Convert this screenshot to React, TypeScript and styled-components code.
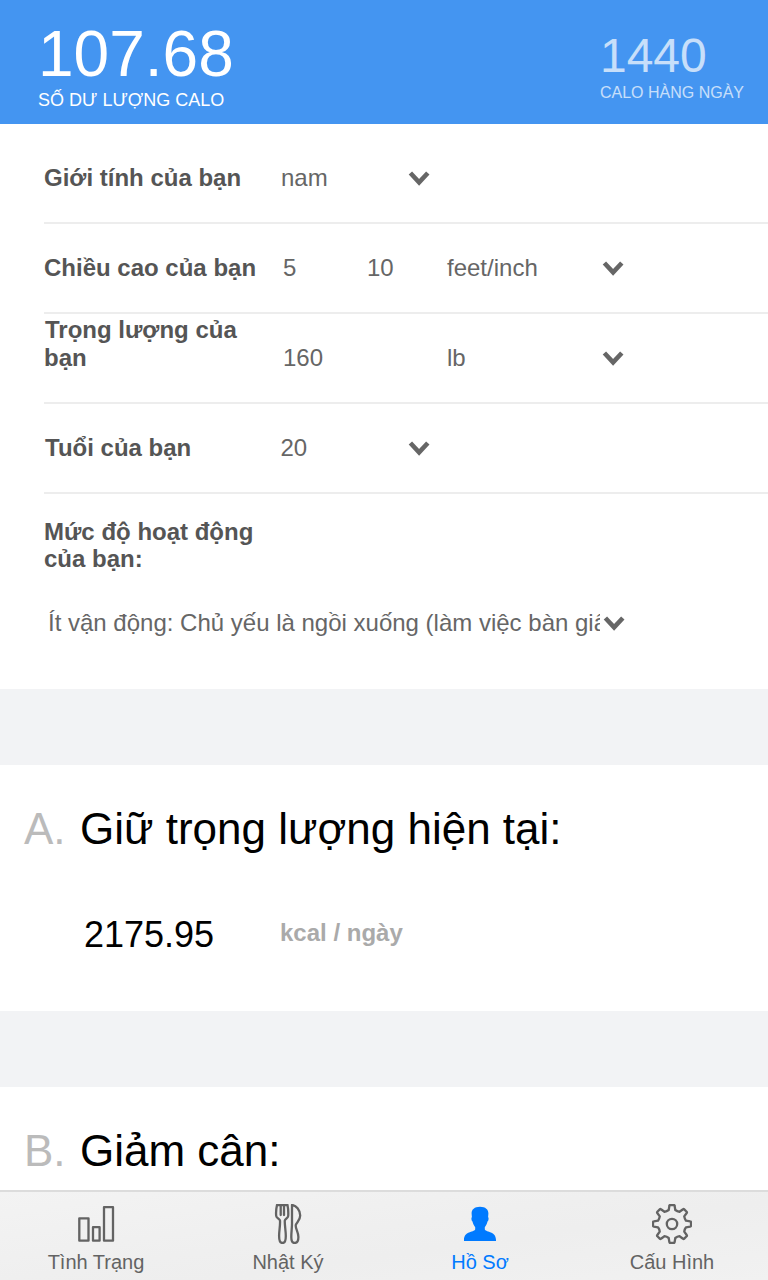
import React from "react";
import styled, { createGlobalStyle } from "styled-components";

const GlobalStyle = createGlobalStyle`
  * { box-sizing: border-box; }
  html, body { margin: 0; padding: 0; background: #fff; }
  body { font-family: "Liberation Sans", Arial, sans-serif; overflow: hidden; }
`;

const Screen = styled.div`
  width: 768px;
  height: 1280px;
  display: flex;
  flex-direction: column;
  overflow: hidden;
  background: #f2f3f5;
`;

const Header = styled.header`
  flex: none;
  height: 124px;
  display: flex;
  justify-content: space-between;
  align-items: flex-end;
  padding: 0 24px 14px 38px;
  background: #4495f1;
  color: #fff;
`;

const Stat = styled.div<{ $muted?: boolean }>`
  display: flex;
  flex-direction: column;
  opacity: ${(p) => (p.$muted ? 0.7 : 1)};
`;

const StatValue = styled.div<{ $size: number; $line: number }>`
  font-size: ${(p) => p.$size}px;
  line-height: ${(p) => p.$line}px;
`;

const StatLabel = styled.div<{ $size: number; $line: number; $bottom?: number }>`
  padding-bottom: ${(p) => p.$bottom ?? 0}px;
  font-size: ${(p) => p.$size}px;
  line-height: ${(p) => p.$line}px;
  white-space: nowrap;
`;

const Content = styled.main`
  flex: 1;
  min-height: 0;
  display: flex;
  flex-direction: column;
  gap: 76px;
  overflow: hidden;
`;

const Form = styled.section`
  flex: none;
  height: 565px;
  padding: 10px 0 0 44px;
  background: #fff;
  color: #666;
  font-size: 24px;
  line-height: 28px;
`;

const Row = styled.div`
  height: 90px;
  display: flex;
  align-items: flex-end;
  padding-bottom: 30px;
  border-bottom: 2px solid #ededed;
`;

const Label = styled.div<{ $width: number; $indent?: number }>`
  flex: none;
  width: ${(p) => p.$width}px;
  text-indent: ${(p) => p.$indent ?? 0}px;
  color: #555;
  font-weight: bold;
`;

const Value = styled.div<{ $width: number; $indent?: number }>`
  flex: none;
  width: ${(p) => p.$width}px;
  padding-left: ${(p) => p.$indent ?? 0}px;
  overflow: hidden;
  white-space: nowrap;
`;

const Arrow = styled.svg`
  flex: none;
  display: block;
  width: 24px;
  height: 28px;
  fill: none;
  stroke: #666;
  stroke-width: 4.6;
`;

const Activity = styled.div`
  display: flex;
  flex-direction: column;
  gap: 37px;
  padding-top: 24px;
  line-height: 27px;
`;

const ActivitySelect = styled.div`
  display: flex;
  align-items: center;
  gap: 2px;
  line-height: 28px;
`;

const Plan = styled.section<{ $height: number }>`
  flex: none;
  height: ${(p) => p.$height}px;
  padding: 38px 24px 0;
  background: #fff;
`;

const PlanTitle = styled.h2`
  display: flex;
  margin: 0;
  font-size: 44px;
  font-weight: normal;
  line-height: 52px;
  color: #000;
  white-space: nowrap;
`;

const PlanLetter = styled.span`
  width: 56px;
  color: #bbb;
`;

const PlanResult = styled.div`
  display: flex;
  align-items: flex-start;
  padding: 59px 0 0 60px;
`;

const Calories = styled.span`
  width: 196px;
  font-size: 36px;
  line-height: 42px;
  color: #000;
`;

const Unit = styled.span`
  padding-top: 5px;
  font-size: 24px;
  line-height: 28px;
  font-weight: bold;
  color: #aaa;
`;

const TabBar = styled.nav`
  flex: none;
  height: 90px;
  display: grid;
  grid-template-columns: repeat(4, 1fr);
  border-top: 2px solid #dcdcdc;
  background: linear-gradient(172deg, #f3f3f3 0%, #efefef 45%, #eeeeee 60%, #f1f1f1 100%);
`;

const Tab = styled.div<{ $active?: boolean }>`
  display: flex;
  flex-direction: column;
  align-items: center;
  gap: 6px;
  padding-top: 12px;
  font-size: 20px;
  line-height: 24px;
  color: ${(p) => (p.$active ? "#007aff" : "#636363")};
`;

const TabIcon = styled.svg`
  display: block;
  width: 40px;
  height: 40px;
  fill: none;
  stroke: currentColor;
  stroke-width: 2.3;
  stroke-linejoin: round;
  stroke-linecap: round;
`;

const Chevron = () => (
  <Arrow viewBox="0 0 24 28">
    <path d="M3.4 9 L12.1 18.4 L20.8 9" />
  </Arrow>
);

const rotate = (x: number, y: number, deg: number) => {
  const a = (deg * Math.PI) / 180;
  const px = 20 + x * Math.cos(a) - y * Math.sin(a);
  const py = 20 + x * Math.sin(a) + y * Math.cos(a);
  return `${px.toFixed(2)} ${py.toFixed(2)}`;
};

const gearPath =
  Array.from({ length: 8 }, (_, i) => {
    const p = (x: number, y: number) => rotate(x, y, i * 45);
    return [
      `${i ? "L" : "M"}${p(-3.3, -14)}`,
      `L${p(-2.6, -18.2)}`,
      `Q${p(-2.5, -19)} ${p(-1.7, -19)}`,
      `L${p(1.7, -19)}`,
      `Q${p(2.5, -19)} ${p(2.6, -18.2)}`,
      `L${p(3.3, -14)}`,
      `Q${p(5.2, -12.6)} ${rotate(-3.3, -14, (i + 1) * 45)}`,
    ].join(" ");
  }).join(" ") + "Z";

export default function App() {
  return (
    <>
      <GlobalStyle />
      <Screen>
        <Header>
          <Stat>
            <StatValue $size={64} $line={72}>107.68</StatValue>
            <StatLabel $size={18} $line={20}>SỐ DƯ LƯỢNG CALO</StatLabel>
          </Stat>
          <Stat $muted>
            <StatValue $size={48} $line={54}>1440</StatValue>
            <StatLabel $size={16} $line={19} $bottom={8}>CALO HÀNG NGÀY</StatLabel>
          </Stat>
        </Header>

        <Content>
          <Form>
            <Row>
              <Label $width={236}>Giới tính của bạn</Label>
              <Value $width={127} $indent={1}>nam</Value>
              <Chevron />
            </Row>
            <Row>
              <Label $width={238}>Chiều cao của bạn</Label>
              <Value $width={85} $indent={1}>5</Value>
              <Value $width={79}>10</Value>
              <Value $width={155} $indent={1}>feet/inch</Value>
              <Chevron />
            </Row>
            <Row>
              <Label $width={238} $indent={1}>Trọng lượng của bạn</Label>
              <Value $width={164} $indent={1}>160</Value>
              <Value $width={155} $indent={1}>lb</Value>
              <Chevron />
            </Row>
            <Row>
              <Label $width={236} $indent={1}>Tuổi của bạn</Label>
              <Value $width={127} $indent={0.5}>20</Value>
              <Chevron />
            </Row>
            <Activity>
              <Label $width={236}>Mức độ hoạt động của bạn:</Label>
              <ActivitySelect>
                <Value $width={556} $indent={4}>
                  Ít vận động: Chủ yếu là ngồi xuống (làm việc bàn giấy)
                </Value>
                <Chevron />
              </ActivitySelect>
            </Activity>
          </Form>

          <Plan $height={246}>
            <PlanTitle>
              <PlanLetter>A.</PlanLetter>Giữ trọng lượng hiện tại:
            </PlanTitle>
            <PlanResult>
              <Calories>2175.95</Calories>
              <Unit>kcal / ngày</Unit>
            </PlanResult>
          </Plan>

          <Plan $height={246}>
            <PlanTitle>
              <PlanLetter>B.</PlanLetter>Giảm cân:
            </PlanTitle>
          </Plan>
        </Content>

        <TabBar>
          <Tab>
            <TabIcon viewBox="0 0 40 40">
              <rect x="3.3" y="14.3" width="9.2" height="22.4" />
              <rect x="17" y="23.2" width="6.6" height="13.5" />
              <rect x="28" y="3.2" width="9" height="33.5" />
            </TabIcon>
            Tình Trạng
          </Tab>
          <Tab>
            <TabIcon viewBox="0 0 40 40">
              <path d="M9 1 H19.5 C20.3 5 20.4 9 20.2 12 C20 14 17.3 15 16.8 16.5 C16.5 21 17.8 26 17.8 32 C17.8 36.5 16.5 39 14.5 39 C12.3 39 11.1 36.5 11.1 32 C11.1 26 12.4 21 12 16.5 C11.6 15 8.4 14 8.2 12 C7.9 9 8.1 5 9 1 Z" />
              <path d="M12.7 1 V11 M16 1 V11" />
              <path d="M24 1 V19.5 C24 24 23.3 28 23.3 33 C23.3 37 24.5 39 26.6 39 C29 39 30.4 37 30.4 33 C30.4 28 27.6 25 27.7 21.5 C28 18.5 32.2 17 32.2 11.5 C32.2 6 28 1.3 24 1 Z" />
            </TabIcon>
            Nhật Ký
          </Tab>
          <Tab $active>
            <TabIcon viewBox="0 0 40 40">
              <path
                fill="currentColor"
                stroke="none"
                d="M20 2.8 C25.5 2.8 28.4 5.6 28.4 9.5 L28.1 13 C29 13.7 28.6 16.8 27.5 17.6 C27 20 25.8 22 24.8 23.2 V25.4 C26.5 28.4 36 27 36 36 V37 H4 V36 C4 27 13.5 28.4 15.2 25.4 V23.2 C14.2 22 13 20 12.5 17.6 C11.4 16.8 11 13.7 11.9 13 L11.6 9.5 C11.6 5.6 14.5 2.8 20 2.8 Z"
              />
            </TabIcon>
            Hồ Sơ
          </Tab>
          <Tab>
            <TabIcon viewBox="0 0 40 40">
              <path d={gearPath} />
              <circle cx="20" cy="20" r="5.2" />
            </TabIcon>
            Cấu Hình
          </Tab>
        </TabBar>
      </Screen>
    </>
  );
}
